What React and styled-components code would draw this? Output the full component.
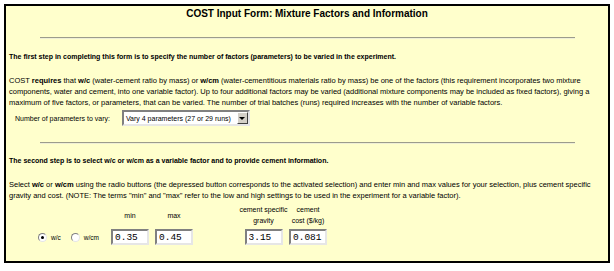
import styled, { createGlobalStyle } from 'styled-components'

const GlobalStyle = createGlobalStyle`
  html, body {
    margin: 0;
    background: #ffffff;
  }
`

const Panel = styled.div`
  box-sizing: border-box;
  width: 606px;
  height: 259px;
  margin: 4px;
  padding: 0 3px;
  border: 2px solid #000;
  background: #ffffcc;
  font-family: "Liberation Sans", Arial, sans-serif;
  font-size: 7px;
  line-height: 11px;
  color: #000;
`

const Title = styled.h1`
  margin: 0;
  padding-top: 1px;
  font-size: 10px;
  line-height: 14px;
  font-weight: bold;
  text-align: center;
`

const Rule = styled.hr`
  height: 0;
  margin: ${(p) => p.$top}px 30px 0 31px;
  border: 0;
  border-top: 1px solid #9c9c8c;
  border-bottom: 1px solid #efefd6;
`

const Step = styled.p`
  margin: ${(p) => p.$top}px 0 0;
  font-weight: bold;
`

const Para = styled.p`
  margin: 13px 0 0;
  font-size: 7.5px;
`

const ParamRow = styled.div`
  display: flex;
  align-items: center;
  gap: 12px;
  margin: 2px 0 0 6px;
  height: 16px;
`

const SelectBox = styled.div`
  display: flex;
  align-items: center;
  box-sizing: border-box;
  width: 128px;
  height: 16px;
  border: 2px solid;
  border-color: #808080 #e6e6e6 #e6e6e6 #808080;
  background: #fff;
`

const SelectText = styled.span`
  flex: 1;
  padding-left: 2px;
  white-space: nowrap;
`

const ArrowButton = styled.span`
  display: flex;
  align-items: center;
  justify-content: center;
  box-sizing: border-box;
  width: 11px;
  height: 12px;
  border: 1px solid;
  border-color: #fff #404040 #404040 #fff;
  background: #d4d0c8;

  &::after {
    content: "";
    border-left: 3px solid transparent;
    border-right: 3px solid transparent;
    border-top: 3px solid #000;
  }
`

const FactorGrid = styled.div`
  display: grid;
  grid-template-columns: 102px 38px 6px 38px 45px 51px 38px;
  grid-template-rows: 22px 16px;
  row-gap: 3px;
  align-items: center;
  margin-top: 3px;
`

const Heading = styled.div`
  grid-column: ${(p) => p.$col};
  text-align: center;
  white-space: nowrap;
`

const RadioGroup = styled.div`
  grid-column: 1;
  display: flex;
  align-items: center;
  justify-content: flex-end;
  padding-right: 12px;
`

const RadioOption = styled.label`
  display: flex;
  align-items: center;
  gap: 4px;
  margin-left: ${(p) => (p.$first ? 0 : 10)}px;
  font-size: 6.5px;
`

const Radio = styled.span`
  position: relative;
  box-sizing: border-box;
  width: 9px;
  height: 9px;
  border-radius: 50%;
  border: 1px solid;
  border-color: #808080 #e6e6e6 #e6e6e6 #808080;
  background: #fff;

  &::after {
    content: "";
    display: ${(p) => (p.$checked ? 'block' : 'none')};
    position: absolute;
    left: 2px;
    top: 2px;
    width: 3px;
    height: 3px;
    border-radius: 50%;
    background: #000;
  }
`

const Field = styled.input`
  grid-column: ${(p) => p.$col};
  justify-self: ${(p) => p.$align || 'start'};
  box-sizing: border-box;
  width: 38px;
  height: 16px;
  padding: 0 2px;
  border: 2px solid;
  border-color: #808080 #e6e6e6 #e6e6e6 #808080;
  background: #fff;
  font-family: "Liberation Mono", "Courier New", monospace;
  font-size: 9.5px;
  color: #000;
  outline: none;
`

export default function App() {
  return (
    <>
      <GlobalStyle />
      <Panel>
        <Title>COST Input Form: Mixture Factors and Information</Title>
        <Rule $top={16} />
        <Step $top={12}>
          The first step in completing this form is to specify the number of factors (parameters) to be varied in the experiment.
        </Step>
        <Para>
          COST <b>requires</b> that <b>w/c</b> (water-cement ratio by mass) or <b>w/cm</b> (water-cementitious materials ratio by mass) be one of the factors (this requirement incorporates two mixture components, water and cement, into one variable factor). Up to four additional factors may be varied (additional mixture components may be included as fixed factors), giving a maximum of five factors, or parameters, that can be varied. The number of trial batches (runs) required increases with the number of variable factors.
        </Para>
        <ParamRow>
          <span>Number of parameters to vary:</span>
          <SelectBox>
            <SelectText>Vary 4 parameters (27 or 29 runs)</SelectText>
            <ArrowButton />
          </SelectBox>
        </ParamRow>
        <Rule $top={16} />
        <Step $top={11}>
          The second step is to select w/c or w/cm as a variable factor and to provide cement information.
        </Step>
        <Para>
          Select <b>w/c</b> or <b>w/cm</b> using the radio buttons (the depressed button corresponds to the activated selection) and enter min and max values for your selection, plus cement specific gravity and cost. (NOTE: The terms "min" and "max" refer to the low and high settings to be used in the experiment for a variable factor).
        </Para>
        <FactorGrid>
          <Heading $col={2}>min</Heading>
          <Heading $col={4}>max</Heading>
          <Heading $col={6}>cement specific<br />gravity</Heading>
          <Heading $col={7}>cement<br />cost ($/kg)</Heading>
          <RadioGroup>
            <RadioOption $first>
              <Radio $checked />
              w/c
            </RadioOption>
            <RadioOption>
              <Radio />
              w/cm
            </RadioOption>
          </RadioGroup>
          <Field $col={2} defaultValue="0.35" />
          <Field $col={4} defaultValue="0.45" />
          <Field $col={6} $align="center" defaultValue="3.15" />
          <Field $col={7} defaultValue="0.081" />
        </FactorGrid>
      </Panel>
    </>
  )
}
